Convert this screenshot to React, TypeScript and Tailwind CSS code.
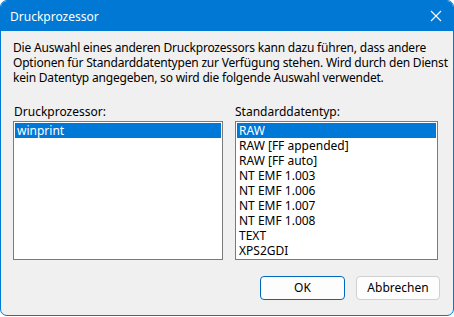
import React from "react";

const font = { fontFamily: '"Segoe UI", "Noto Sans", "Open Sans", sans-serif' };

function ListBox({ items, selected }: { items: string[]; selected: number }) {
  return (
    <div className="h-[139px] border border-[#7a7a7a] bg-white p-[1px]">
      {items.map((it, i) => (
        <div
          key={it}
          className={
            "h-[15px] pl-[2px] text-[12px] leading-[15px] whitespace-nowrap " +
            (i === selected ? "bg-[#0078d7] text-white" : "text-black")
          }
        >
          {it}
        </div>
      ))}
    </div>
  );
}

export default function App() {
  return (
    <div className="w-[454px] h-[317px] bg-white" style={font}>
      <div className="w-[454px] h-[316px] border border-[#0078d4] rounded-[7px] overflow-hidden bg-[#f0f0f0] flex flex-col">
        <div className="h-[30px] bg-[#0078d4] flex items-center justify-between pl-[9px] pr-[9px] shrink-0">
          <span className="text-white text-[12px] leading-[15px] pt-[1px]">Druckprozessor</span>
          <svg width="12" height="12" viewBox="0 0 12 12" className="mr-[2px]">
            <path d="M1 1 L11 11 M11 1 L1 11" stroke="white" strokeWidth="1.1" />
          </svg>
        </div>
        <div className="flex-1 flex flex-col px-[12px] pt-[9px]">
          <div className="text-[12px] leading-[15px] text-black tracking-[-0.2px]">
            <div className="whitespace-nowrap">Die Auswahl eines anderen Druckprozessors kann dazu führen, dass andere</div>
            <div className="whitespace-nowrap">Optionen für Standarddatentypen zur Verfügung stehen. Wird durch den Dienst</div>
            <div className="whitespace-nowrap">kein Datentyp angegeben, so wird die folgende Auswahl verwendet.</div>
          </div>
          <div className="flex gap-[12px] mt-[19px]">
            <div className="w-[210px] flex flex-col">
              <div className="text-[12px] leading-[15px] pl-[1px] mb-[2px] text-black">Druckprozessor:</div>
              <ListBox items={["winprint"]} selected={0} />
            </div>
            <div className="w-[203px] flex flex-col">
              <div className="text-[12px] leading-[15px] mb-[2px] text-black">Standarddatentyp:</div>
              <ListBox
                items={[
                  "RAW",
                  "RAW [FF appended]",
                  "RAW [FF auto]",
                  "NT EMF 1.003",
                  "NT EMF 1.006",
                  "NT EMF 1.007",
                  "NT EMF 1.008",
                  "TEXT",
                  "XPS2GDI",
                ]}
                selected={0}
              />
            </div>
          </div>
          <div className="flex justify-end gap-[11px] mt-[16px]">
            <button className="w-[85px] h-[24px] rounded-[4px] border border-[#0067c0] bg-[#fdfdfd] text-[12px] text-black">
              OK
            </button>
            <button className="w-[84px] h-[24px] rounded-[4px] border border-[#d0d0d0] bg-[#fdfdfd] text-[12px] text-black mr-[1px]">
              Abbrechen
            </button>
          </div>
        </div>
      </div>
    </div>
  );
}
